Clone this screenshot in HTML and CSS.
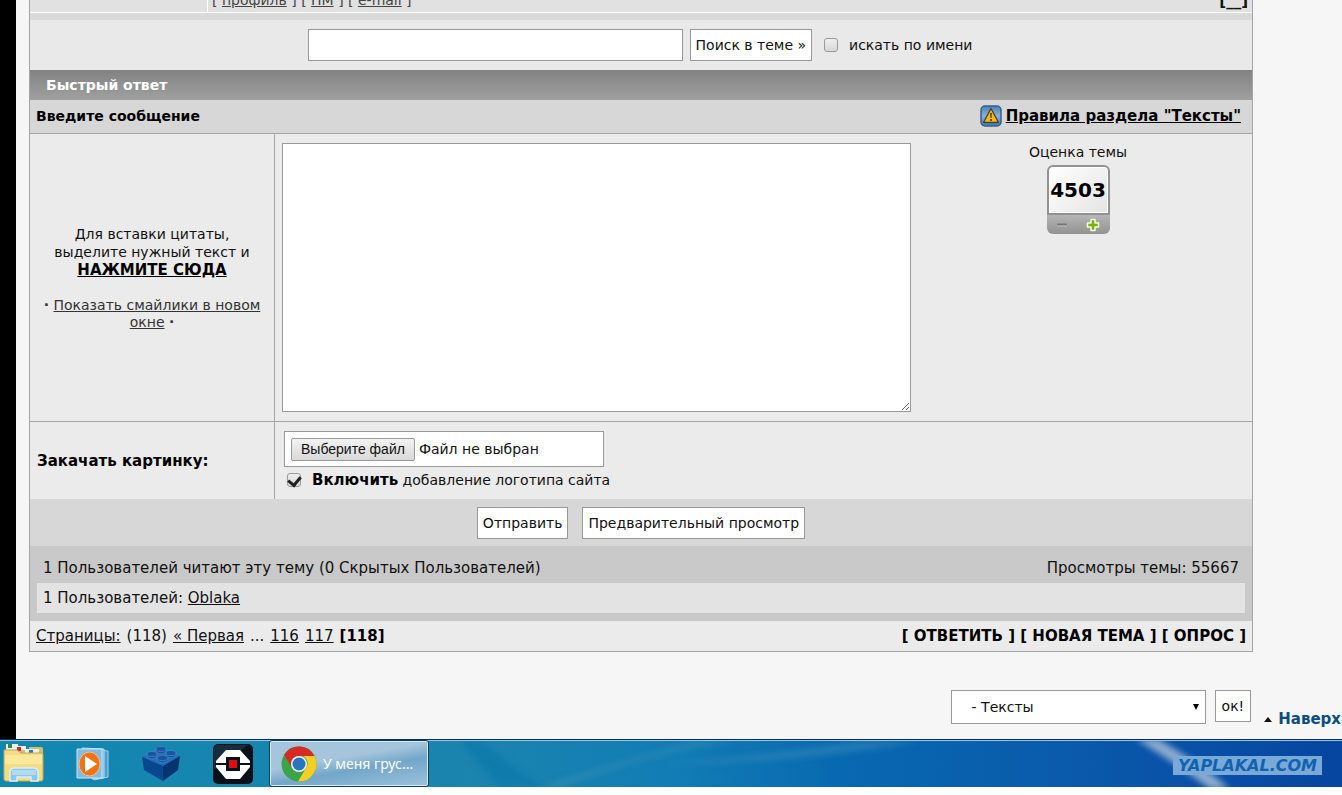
FILE: index.html
```
<!DOCTYPE html>
<html lang="ru">
<head>
<meta charset="utf-8">
<title>Тексты</title>
<link rel="stylesheet" href="styles.css">
</head>
<body>
<div class="page">
  <main class="forum">
    <div class="post-foot">
      <div class="post-author"></div>
      <nav class="post-links">[ <a href="#">профиль</a> ] [ <a href="#">ПМ</a> ] [ <a href="#">e-mail</a> ]</nav>
      <a class="post-up" href="#">[__]</a>
    </div>
    <form class="search">
      <input class="box search-text" type="text" aria-label="Поиск в теме">
      <button class="box btn" type="button">Поиск в теме »</button>
      <label class="check-label by-name"><input class="check" type="checkbox">искать по имени</label>
    </form>
    <h2 class="title">Быстрый ответ</h2>
    <div class="subtitle">
      <label for="message">Введите сообщение</label>
      <div class="rules">
        <svg width="22" height="22" viewBox="0 0 22 22" aria-hidden="true">
          <defs><linearGradient id="warn" x2="0" y2="1"><stop stop-color="#4b7fb5"/><stop offset=".5" stop-color="#87b3dc"/><stop offset="1" stop-color="#3f79b8"/></linearGradient></defs>
          <rect x="1" y="1" width="20" height="20" rx="4" fill="url(#warn)" stroke="#34608f" stroke-width="1.5"/>
          <path d="M11 3.500 18.500 17.500H3.500Z" fill="#f3b91d" stroke="#4a4122" stroke-width="1.3" stroke-linejoin="round"/>
          <path d="M10 8h2l-.4 5h-1.200ZM10 14h2v2h-2Z" fill="#6a4a13"/>
        </svg>
        <a href="#">Правила раздела "Тексты"</a>
      </div>
    </div>
    <form>
      <div class="row row-message">
        <div class="side side-help">
          <p>Для вставки цитаты, выделите нужный текст и <a class="strong" href="#">НАЖМИТЕ СЮДА</a></p>
          <p class="smiles"><b>·</b> <a href="#">Показать смайлики в новом окне</a> <b>·</b></p>
        </div>
        <div class="editor">
          <textarea class="box" id="message"></textarea>
          <div class="rating">
            <span>Оценка темы</span>
            <div class="score">
              <strong>4503</strong>
              <div class="votes">
                <button type="button" aria-label="Минус"><svg width="12" height="12" viewBox="0 0 12 12"><path d="M1 5.500h10" stroke="#777" stroke-width="2"/><path d="M1 7h10" stroke="#bbb"/></svg></button>
                <button type="button" aria-label="Плюс"><svg width="14" height="14" viewBox="0 0 14 14"><path d="M5 1.500h4V5h3.500v4H9v3.500H5V9H1.500V5H5Z" fill="#78b010" stroke="#f4ffdc" stroke-width="1.5" stroke-linejoin="round"/></svg></button>
              </div>
            </div>
          </div>
        </div>
      </div>
      <div class="row">
        <div class="side side-upload">Закачать картинку:</div>
        <div class="upload">
          <label class="box file"><input type="file"><span class="file-btn">Выберите файл</span><span>Файл не выбран</span></label>
          <label class="check-label logo"><input class="check" type="checkbox" checked><span><b>Включить</b> добавление логотипа сайта</span></label>
        </div>
      </div>
      <div class="submit">
        <button class="box btn" type="button">Отправить</button>
        <button class="box btn" type="button">Предварительный просмотр</button>
      </div>
    </form>
    <section class="readers">
      <div class="readers-head"><span>1 Пользователей читают эту тему (0 Скрытых Пользователей)</span><span>Просмотры темы: 55667</span></div>
      <div class="readers-list">1 Пользователей: <a href="#">Oblaka</a></div>
    </section>
    <div class="pages">
      <nav class="page-links"><a href="#">Страницы:</a> <span>(118)</span> <a href="#">« Первая</a> <span>...</span> <a href="#">116</a> <a href="#">117</a> <b>[118]</b></nav>
      <nav class="actions"><a href="#">[ ОТВЕТИТЬ ]</a> <a href="#">[ НОВАЯ ТЕМА ]</a> <a href="#">[ ОПРОС ]</a></nav>
    </div>
  </main>
  <form class="jump">
    <div class="jump-select">
      <select class="box" aria-label="Раздел"><option>- Тексты</option></select>
    </div>
    <button class="box btn" type="button">ок!</button>
    <a class="to-top" href="#"><i></i>Наверх</a>
  </form>
</div>
<footer class="taskbar">
  <svg class="sky" viewBox="0 0 1342 46" preserveAspectRatio="none" aria-hidden="true">
    <defs>
      <linearGradient id="sky"><stop stop-color="#1187b0"/><stop offset=".34" stop-color="#1b84ae"/><stop offset=".5" stop-color="#127db5"/><stop offset=".63" stop-color="#0868b0"/><stop offset=".8" stop-color="#0a5aab"/><stop offset="1" stop-color="#0645a0"/></linearGradient>
      <filter id="soft" x="-20%" y="-100%" width="140%" height="300%"><feGaussianBlur stdDeviation="3"/></filter>
    </defs>
    <rect width="1342" height="46" fill="url(#sky)"/>
    <g filter="url(#soft)">
      <path d="M460 0 500 46H540L480 0Z" fill="#0873a8" opacity=".4"/>
      <path d="M560 46Q670 5 740 0H700Q620 20 540 46Z" fill="#4295b5" opacity=".5"/>
      <path d="M650 24Q820 20 920 0H860Q740 18 650 24Z" fill="#3c8fb8" opacity=".5"/>
      <path d="M1136-2H1158Q1200 22 1230 48H1210Q1180 25 1136-2Z" fill="#9bb5d2" opacity=".9"/>
    </g>
  </svg>
  <nav class="apps">
    <button type="button" aria-label="Проводник"><svg width="44" height="44" viewBox="0 0 44 44">
      <path d="M7 4h11l3 3h8V5h12q2 0 2 2v30H7Z" fill="#d8bd67"/><path d="M6 2h12v6H6ZM15 4h11v4H15Zm10 3h14v4H25Z" fill="#e8eef4"/><path d="M8 2h4v4H8Z" fill="#318a45"/><path d="M17 5h4v4h-4Z" fill="#c22f24"/><path d="M29 8h4v3h-4Z" fill="#2b78c0"/>
      <path d="M4 8h13l4 3h21q1 0 1 2v24q0 2-2 2H6q-2 0-2-2Z" fill="#f3dc84" stroke="#c6aa52"/><path d="M5 13h37v9H5Z" fill="#fff0ac" opacity=".6"/>
      <path d="M10 39V30q0-3 4-4h20q4 1 4 4v9h-7v-4H17v4Z" fill="#8cc7e9" stroke="#d8f0fa" stroke-width="1.5"/><path d="M12 28h24v5H12Z" fill="#c2e3f4" opacity=".7"/></svg></button>
    <button type="button" aria-label="Проигрыватель"><svg width="34" height="34" viewBox="0 0 34 34">
      <path d="m10 2 22 2v26l-14 3Z" fill="#4d9ed0" stroke="#9ad1ed"/><path d="m6 1 22 1v29l-12 1Z" fill="#75b5df" stroke="#b8dced"/><path d="M1 2h25v29H1Z" fill="#80bce4" stroke="#c6e7f5"/><ellipse cx="13.500" cy="17" rx="10.500" ry="12" fill="#ed7419" stroke="#ffbe82"/><path d="M9 9v16l12-8Z" fill="#fff"/></svg></button>
    <button type="button" aria-label="Конструктор"><svg width="40" height="36" viewBox="0 0 40 36">
      <path d="m1 11 20-8 18 7-17 10Z" fill="#236aba"/><path d="m1 11 21 9v15L3 24Z" fill="#07478d"/><path d="m22 20 17-10-2 14-15 11Z" fill="#04346f"/>
      <g fill="#17569f" stroke="#4c8bcc" stroke-width=".7"><path d="M15 3v3q5 4 10 0V3Z"/><ellipse cx="20" cy="3" rx="5" ry="2.400"/><path d="M6 8v3q5 4 10 0V8Z"/><ellipse cx="11" cy="8" rx="5" ry="2.500"/><path d="M25 7v3q5 4 10 0V7Z"/><ellipse cx="30" cy="7" rx="5" ry="2.500"/><path d="M16 12v3q5 4 11 0v-3Z"/><ellipse cx="21.500" cy="12" rx="5.500" ry="2.700"/></g></svg></button>
    <button type="button" aria-label="Робот"><svg width="40" height="40" viewBox="0 0 40 40">
      <rect width="40" height="40" rx="5" fill="#07111a"/><path d="M1 5q0-4 4-4h30L1 26Z" fill="#234154" opacity=".6"/><path d="M13 6h14l10 11v6L27 35H13L3 23v-6Z" fill="#fff"/><path d="M2 20h36" stroke="#07111a" stroke-width="2"/><path d="M13 13h14v14H13Z" fill="#07111a"/><path d="M16 16h8v8h-8Z" fill="#e30b12"/></svg></button>
  </nav>
  <button class="task" type="button">
    <svg width="36" height="36" viewBox="0 0 36 36" aria-hidden="true">
      <circle cx="18" cy="18" r="17.500" fill="#3ba448"/><path d="M3 9A17.500 17.500 0 0 1 33.500 10H18a8 8 0 0 0-7.500 11Z" fill="#d52b24"/><path d="M33.500 10A17.500 17.500 0 0 1 17 35.500L25 22a8 8 0 0 0-3-12Z" fill="#f7cf23"/><circle cx="18" cy="18" r="8" fill="#eef3f5"/><circle cx="18" cy="18" r="6.500" fill="#2974bf"/></svg>
    <span>У меня грус...</span>
  </button>
  <span class="mark">YAPLAKAL.COM</span>
</footer>
</body>
</html>
```
FILE: styles.css
```
* { box-sizing: border-box; }
body {
  margin: 0;
  background: #fff;
  color: #111;
  font: 15px/18px "DejaVu Sans", Verdana, sans-serif;
}
a { color: inherit; }
p, h2 { margin: 0; }
button, input, select, textarea { font: inherit; color: inherit; margin: 0; }

.page {
  background: #f6f6f6;
  border-left: 16px solid #000;
  padding: 0 0 11px 13px;
}
.forum {
  margin-right: 89px;
  border: 1px solid #a5a5a5;
  border-top: 0;
  background: #e9e9e9;
}
.box {
  background: #fff;
  border: 1px solid #999;
  border-radius: 0;
}
.btn {
  height: 32px;
  padding: 0 5px;
  font-size: 14px;
}

.post-foot {
  display: flex;
  align-items: flex-end;
  height: 20px;
  overflow: hidden;
  background: #e1e1e1;
  border-bottom: 7px solid #dadada;
  box-shadow: inset 0 -1px #fff;
}
.post-author { width: 178px; height: 20px; border-right: 1px solid #fff; }
.post-links { flex: 1; padding: 0 4px 4px; font-size: 14px; color: #444; }
.post-up { padding: 0 4px 3px; font-weight: bold; text-decoration: none; }

.search {
  display: flex;
  justify-content: center;
  align-items: center;
  gap: 7px;
  height: 50px;
  padding-right: 2px;
}
.search-text { width: 375px; height: 32px; }
.check-label { display: flex; align-items: center; gap: 11px; }
.by-name { margin-left: 5px; font-size: 14px; }
.check {
  appearance: none;
  display: grid;
  place-items: center;
  width: 14px;
  height: 14px;
  border: 1px solid #999;
  border-radius: 3px;
  background: linear-gradient(#eee, #d8d8d8);
}
.check:checked::after {
  content: "";
  width: 6px;
  height: 9px;
  margin-bottom: 2px;
  border: solid #222;
  border-width: 0 3px 3px 0;
  transform: rotate(40deg);
}

.title {
  padding: 6px 16px;
  background: linear-gradient(#828282, #a0a0a0);
  color: #fff;
  font-size: 14px;
  line-height: 18px;
}
.subtitle {
  display: flex;
  justify-content: space-between;
  align-items: center;
  height: 34px;
  padding: 0 11px 2px 6px;
  background: #d7d7d7;
  border-bottom: 1px solid #a5a5a5;
  color: #000;
  font-size: 14px;
  font-weight: bold;
}
.rules { display: flex; align-items: center; gap: 4px; font-size: 15px; }

.row { display: flex; background: #ebebeb; }
.row-message { border-bottom: 1px solid #a5a5a5; }
.side {
  flex: 0 0 245px;
  border-right: 1px solid #a5a5a5;
  font-size: 14px;
}
.side-help {
  display: flex;
  flex-direction: column;
  justify-content: center;
  gap: 18px;
  padding: 0 12px;
  text-align: center;
}
.strong { display: block; color: #000; font-size: 15px; font-weight: bold; }
.smiles { color: #333; line-height: 17px; }
.editor { flex: 1; display: flex; padding: 9px 7px; }
.editor textarea { flex: 0 1 629px; height: 269px; resize: both; }
.rating {
  flex: 1;
  display: flex;
  flex-direction: column;
  align-items: center;
  gap: 4px;
  font-size: 14px;
}
.score { width: 63px; color: #000; }
.score strong {
  display: flex;
  justify-content: center;
  border: 2px solid #929292;
  border-radius: 6px 6px 0 0;
  background: linear-gradient(135deg, #fff, #e4e4e4);
  box-shadow: inset 0 0 0 1px #fff;
  font-size: 20px;
  line-height: 46px;
}
.votes {
  display: flex;
  justify-content: space-around;
  align-items: center;
  height: 19px;
  background: linear-gradient(#b5b5b5, #929292);
  border-radius: 0 0 6px 6px;
}
.votes button { display: flex; padding: 0; border: 0; background: none; }

.side-upload {
  display: flex;
  align-items: center;
  padding-left: 7px;
  color: #000;
  font-size: 15px;
  font-weight: bold;
}
.upload { padding: 9px; font-size: 14px; }
.file {
  position: relative;
  display: flex;
  align-items: center;
  gap: 4px;
  width: 320px;
  height: 36px;
  padding: 0 6px;
}
.file input { position: absolute; inset: 0; width: 100%; opacity: 0; }
.file-btn {
  padding: 2px 9px;
  border: 1px solid #999;
  border-radius: 2px;
  background: linear-gradient(#f3f3f3, #d8d8d8);
  font: 14px/17px "Liberation Sans", Arial, sans-serif;
}
.logo { padding: 4px 3px 1px; }
.logo b { color: #000; font-size: 15px; }
.submit {
  display: flex;
  justify-content: center;
  gap: 14px;
  padding: 8px 0 7px;
  background: #d7d7d7;
}

.readers { padding: 7px 7px 8px; background: #c9c9c9; }
.readers-head, .readers-list { padding: 6px; }
.readers-head { display: flex; justify-content: space-between; }
.readers-list { background: #e3e3e3; }
.pages {
  display: flex;
  justify-content: space-between;
  padding: 6px;
  background: #ebebeb;
}
.page-links { display: flex; gap: 6px; }
.pages b, .actions { color: #000; }
.actions { font-weight: bold; }
.actions a { text-decoration: none; }

.jump {
  display: flex;
  justify-content: flex-end;
  align-items: flex-start;
  padding-top: 38px;
}
.jump-select { position: relative; width: 255px; margin-right: 9px; }
.jump-select select {
  appearance: none;
  display: block;
  width: 100%;
  height: 34px;
  padding: 0 20px;
  font-size: 14px;
}
.jump-select::after {
  content: "";
  position: absolute;
  right: 7px;
  top: 14px;
  border: solid transparent;
  border-width: 6px 3px 0;
  border-top-color: #000;
}
.jump .btn { padding: 0 6px; }
.to-top {
  display: flex;
  align-items: center;
  gap: 6px;
  margin-left: 13px;
  padding: 20px 1px 0 0;
  color: #0b4c80;
  font-weight: bold;
  text-decoration: none;
}
.to-top i {
  border: solid transparent;
  border-width: 0 4px 5px;
  border-bottom-color: #111;
}

.taskbar {
  position: relative;
  display: flex;
  align-items: center;
  height: 48px;
  border-top: 1px solid #092b5b;
  box-shadow: inset 0 1px #9cc5de;
  background: #127db5;
}
.sky { position: absolute; inset: 1px 0 0; width: 100%; height: 46px; }
.apps, .task { position: relative; }
.apps { flex: 0 0 269px; display: flex; align-items: center; justify-content: space-between; padding-right: 16px; }
.apps button { display: flex; padding: 0; border: 0; background: none; }
.task {
  display: flex;
  align-items: center;
  gap: 6px;
  width: 160px;
  height: 47px;
  padding: 0 11px;
  border: 1px solid #123f60;
  border-radius: 3px;
  background: linear-gradient(170deg, #a5c5dc 40%, #73a6c9 60%, #9bc3dc);
  box-shadow: inset 0 0 0 1px #d8ecf6;
  color: #fff;
  font: 14px/18px "Noto Sans", sans-serif;
  white-space: nowrap;
}
.mark {
  position: relative;
  margin: 4px 20px 0 auto;
  padding: 0 5px;
  background: #79a9d8;
  color: #1262ae;
  font: italic bold 16px/19px "DejaVu Sans", sans-serif;
}
```
